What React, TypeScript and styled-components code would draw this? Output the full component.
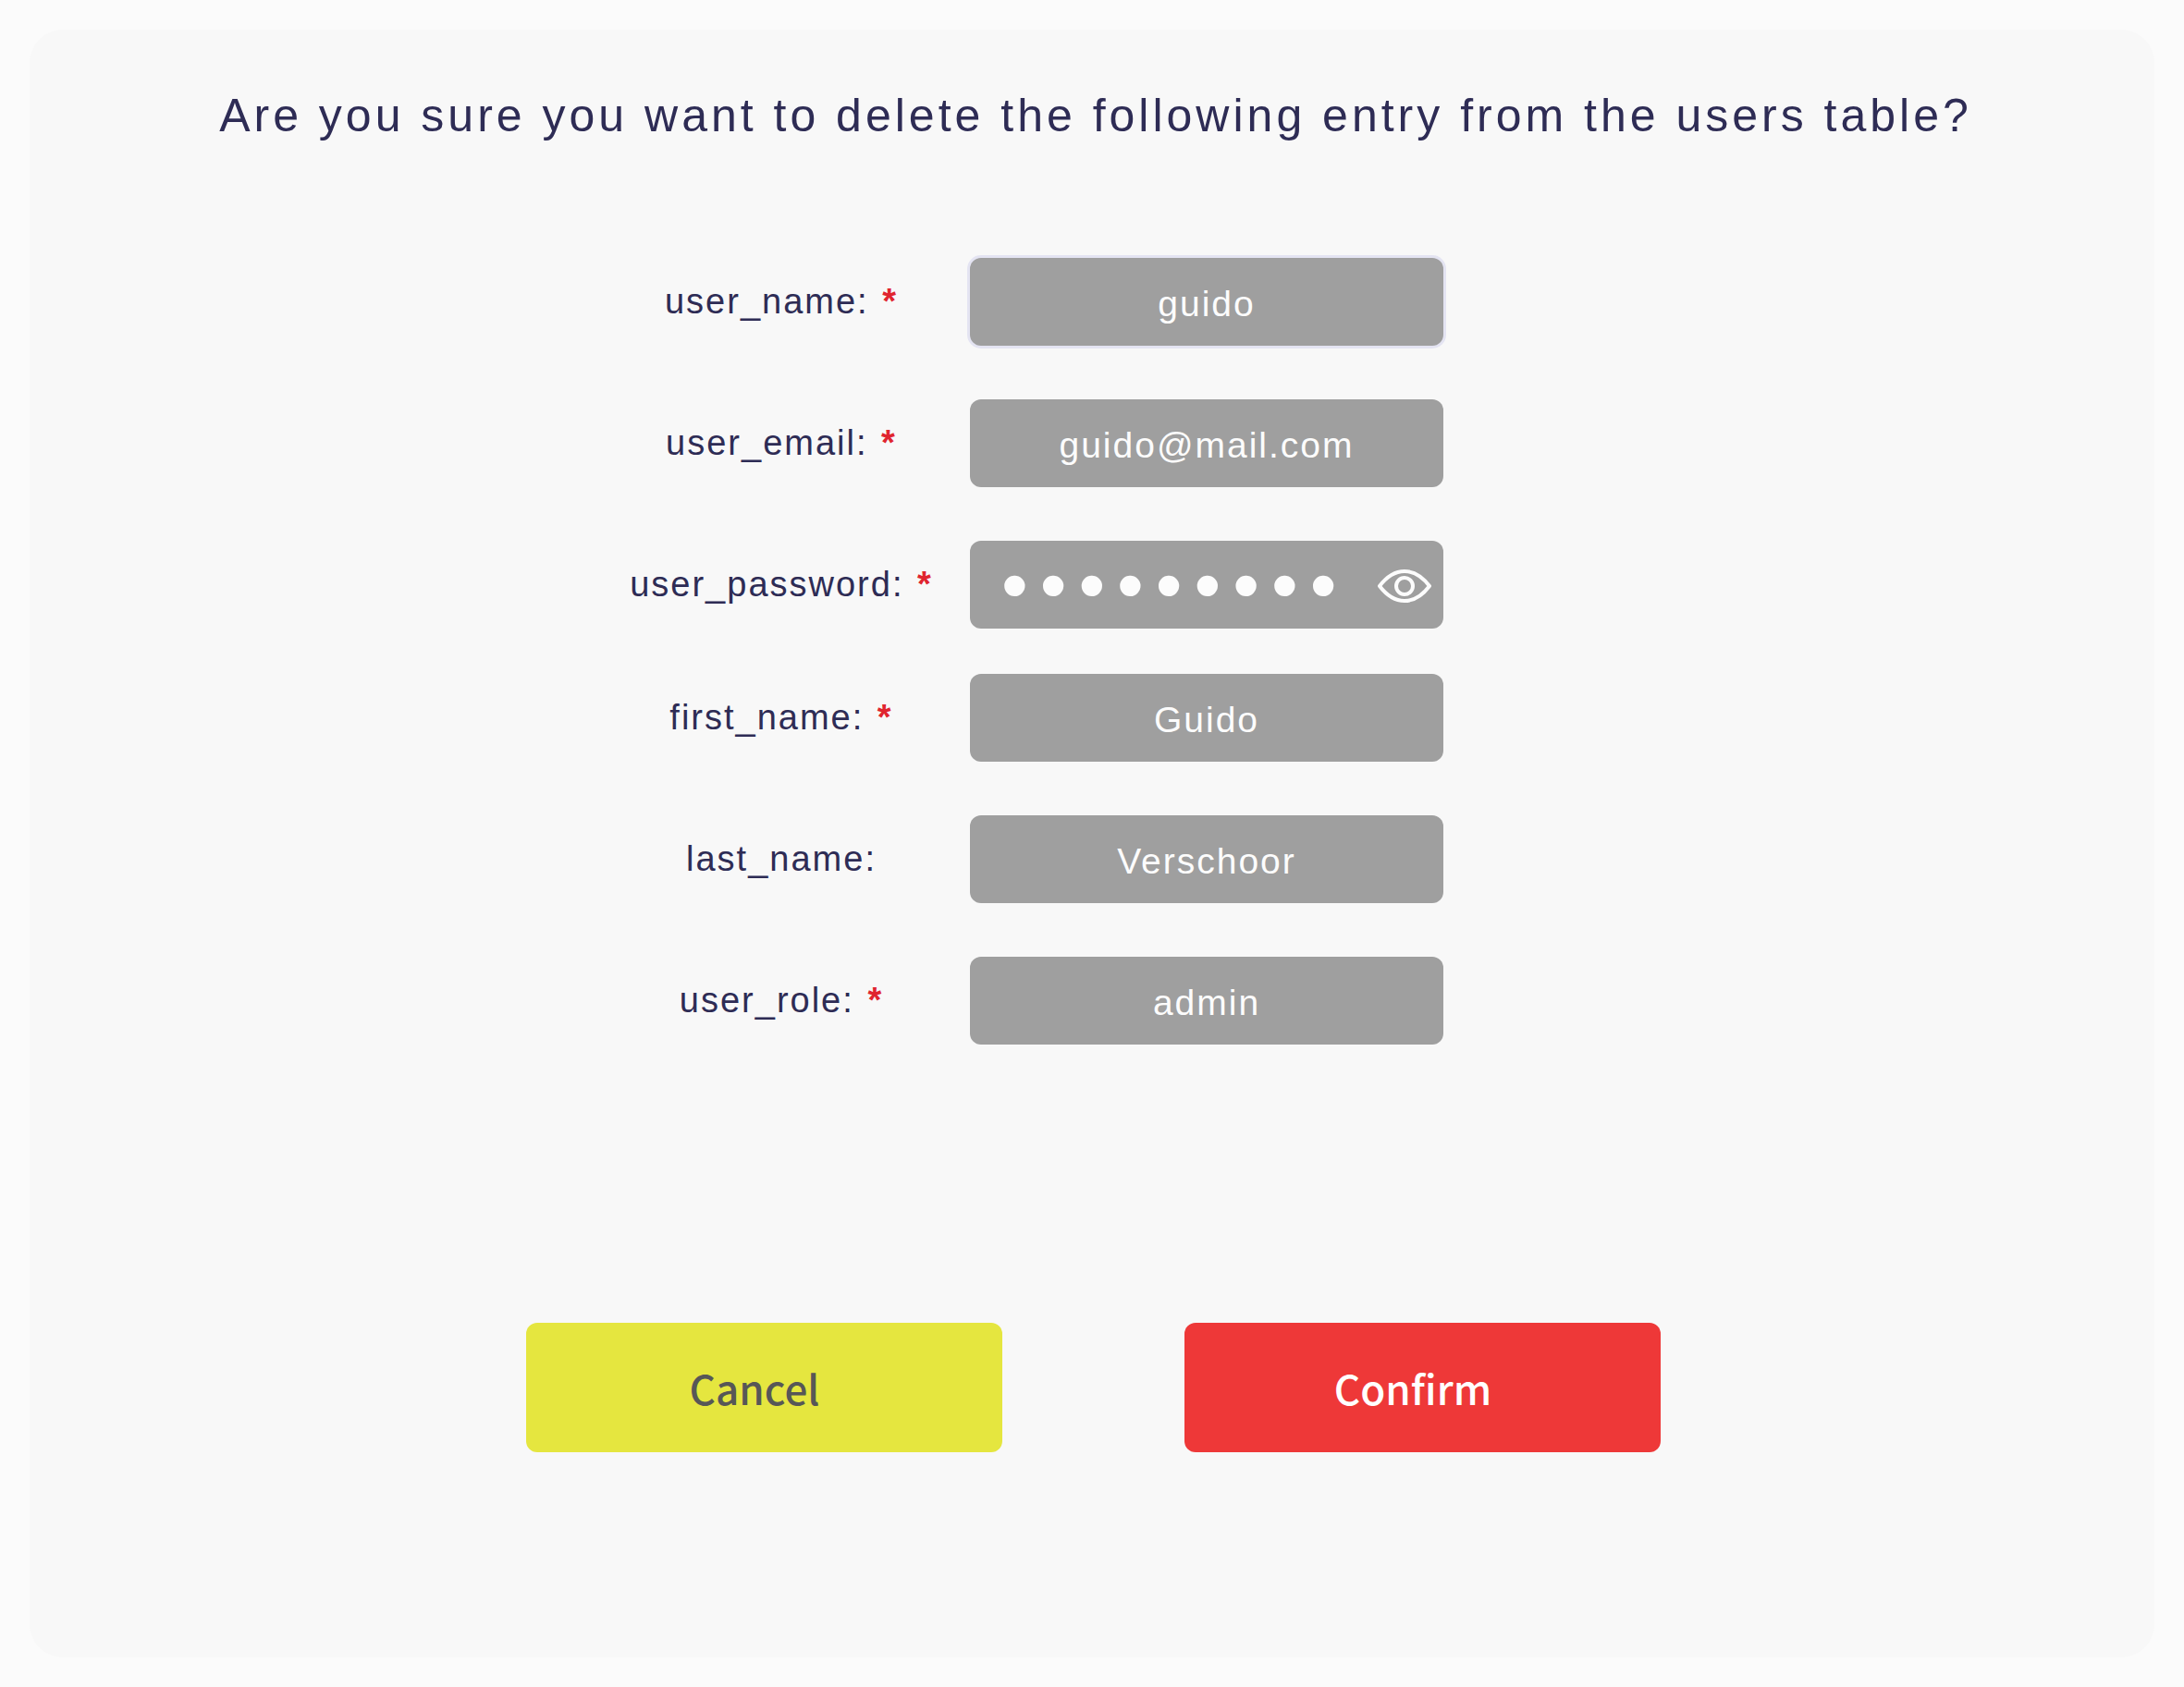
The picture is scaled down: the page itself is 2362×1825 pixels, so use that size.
import { useState } from "react";
import styled, { createGlobalStyle } from "styled-components";

const GlobalStyle = createGlobalStyle`
  * { box-sizing: border-box; }
  body { margin: 0; background: #fbfbfb; }
`;

const Page = styled.main`
  min-height: 100vh;
  padding: 32px;
  display: flex;
  font-family: "Liberation Sans", Arial, sans-serif;
  color: #2e2c55;
`;

const Card = styled.form`
  flex: 1;
  display: flex;
  flex-direction: column;
  align-items: center;
  padding: 60px 32px;
  border-radius: 36px;
  background: #f8f8f8;
`;

const Title = styled.h1`
  margin: 0 0 121px;
  padding-left: 8px;
  font-size: 50px;
  font-weight: 400;
  line-height: 66px;
  letter-spacing: 4px;
  text-align: center;
`;

const Fields = styled.div`
  display: flex;
  flex-direction: column;
  gap: 49px;
  padding-right: 136px;
`;

const FieldGroup = styled.div`
  display: flex;
  flex-direction: column;
  gap: 58px;
`;

const Row = styled.div`
  display: grid;
  grid-template-columns: 360px 512px;
  column-gap: 24px;
  align-items: center;
`;

const Label = styled.label`
  padding-bottom: 2px;
  font-size: 38px;
  line-height: 44px;
  letter-spacing: 2px;
  text-align: center;
`;

const Required = styled.span`
  margin-left: 2px;
  font-weight: 700;
  color: #e0252f;
`;

const Box = styled.div<{ $active?: boolean }>`
  display: flex;
  align-items: center;
  height: 95px;
  border-radius: 12px;
  background: #9f9f9f;
  box-shadow: ${(p) => (p.$active ? "0 0 0 3px #e4e4f2" : "none")};
`;

const Input = styled.input<{ $masked?: boolean }>`
  flex: 1;
  min-width: 0;
  height: 100%;
  padding: ${(p) => (p.$masked ? "0 0 0 34px" : "5px 0 0")};
  border: 0;
  outline: 0;
  background: transparent;
  color: #fcfcfc;
  font-family: inherit;
  font-size: ${(p) => (p.$masked ? "82px" : "39px")};
  letter-spacing: ${(p) => (p.$masked ? "13px" : "2px")};
  text-align: ${(p) => (p.$masked ? "left" : "center")};
`;

const Reveal = styled.button`
  display: flex;
  padding: 2px 0 0;
  margin-right: 12px;
  border: 0;
  background: none;
  color: #fcfcfc;
  cursor: pointer;
`;

const Actions = styled.div`
  display: flex;
  gap: 197px;
  margin-top: 301px;
  padding-left: 2px;
`;

const Action = styled.button<{ $bg: string; $fg: string }>`
  width: 515px;
  height: 140px;
  padding: 0 20px 0 0;
  border: 0;
  border-radius: 12px;
  background: ${(p) => p.$bg};
  color: ${(p) => p.$fg};
  font-family: "Noto Sans CJK SC", "Noto Sans", sans-serif;
  font-size: 44px;
  font-weight: 500;
  cursor: pointer;
`;

type FieldProps = {
  name: string;
  value: string;
  required?: boolean;
  active?: boolean;
  secret?: boolean;
};

function EyeIcon() {
  return (
    <svg width="60" height="40" viewBox="0 0 60 40" fill="none" stroke="currentColor" strokeWidth="4" strokeLinejoin="round" aria-hidden="true">
      <path d="M3 20C11 9.500 20 4 30 4C40 4 49 9.500 57 20C49 30.500 40 36 30 36C20 36 11 30.500 3 20Z" />
      <circle cx="30" cy="20" r="9" />
    </svg>
  );
}

function Field({ name, value, required, active, secret }: FieldProps) {
  const [text, setText] = useState(value);
  const [shown, setShown] = useState(false);
  const masked = Boolean(secret && !shown);
  return (
    <Row>
      <Label htmlFor={name}>
        {name}: {required && <Required>*</Required>}
      </Label>
      <Box $active={active}>
        <Input
          id={name}
          name={name}
          type={masked ? "password" : "text"}
          required={required}
          value={text}
          onChange={(e) => setText(e.target.value)}
          $masked={masked}
        />
        {secret && (
          <Reveal type="button" aria-label="Show password" onClick={() => setShown(!shown)}>
            <EyeIcon />
          </Reveal>
        )}
      </Box>
    </Row>
  );
}

export default function App() {
  return (
    <>
      <GlobalStyle />
      <Page>
        <Card onSubmit={(e) => e.preventDefault()}>
          <Title>Are you sure you want to delete the following entry from the users table?</Title>
          <Fields>
            <FieldGroup>
              <Field name="user_name" value="guido" required active />
              <Field name="user_email" value="guido@mail.com" required />
              <Field name="user_password" value="guido1234" required secret />
            </FieldGroup>
            <FieldGroup>
              <Field name="first_name" value="Guido" required />
              <Field name="last_name" value="Verschoor" />
              <Field name="user_role" value="admin" required />
            </FieldGroup>
          </Fields>
          <Actions>
            <Action type="button" $bg="#e5e63f" $fg="#575757">Cancel</Action>
            <Action type="submit" $bg="#ee3838" $fg="#ffffff">Confirm</Action>
          </Actions>
        </Card>
      </Page>
    </>
  );
}
